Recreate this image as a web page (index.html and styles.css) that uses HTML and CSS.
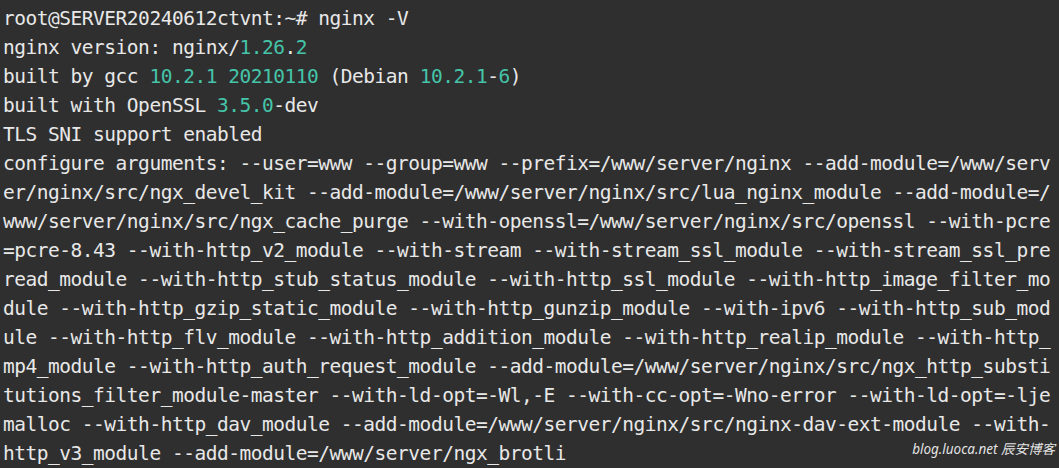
FILE: index.html
```html
<!DOCTYPE html>
<html lang="en">
<head>
<meta charset="utf-8">
<title>nginx -V</title>
<link rel="stylesheet" href="styles.css">
</head>
<body>
<main class="terminal">
<div class="line">root@SERVER20240612ctvnt:~# nginx -V</div>
<div class="line">nginx version: nginx/<span class="num">1.26</span>.<span class="num">2</span></div>
<div class="line">built by gcc <span class="num">10.2.1 20210110</span> (Debian <span class="num">10.2.1</span>-<span class="num">6</span>)</div>
<div class="line">built with OpenSSL <span class="num">3.5.0</span>-dev</div>
<div class="line">TLS SNI support enabled</div>
<div class="line">configure arguments: --user=www --group=www --prefix=/www/server/nginx --add-module=/www/serv</div>
<div class="line">er/nginx/src/ngx_devel_kit --add-module=/www/server/nginx/src/lua_nginx_module --add-module=/</div>
<div class="line">www/server/nginx/src/ngx_cache_purge --with-openssl=/www/server/nginx/src/openssl --with-pcre</div>
<div class="line">=pcre-8.43 --with-http_v2_module --with-stream --with-stream_ssl_module --with-stream_ssl_pre</div>
<div class="line">read_module --with-http_stub_status_module --with-http_ssl_module --with-http_image_filter_mo</div>
<div class="line">dule --with-http_gzip_static_module --with-http_gunzip_module --with-ipv6 --with-http_sub_mod</div>
<div class="line">ule --with-http_flv_module --with-http_addition_module --with-http_realip_module --with-http_</div>
<div class="line">mp4_module --with-http_auth_request_module --add-module=/www/server/nginx/src/ngx_http_substi</div>
<div class="line">tutions_filter_module-master --with-ld-opt=-Wl,-E --with-cc-opt=-Wno-error --with-ld-opt=-lje</div>
<div class="line">malloc --with-http_dav_module --add-module=/www/server/nginx/src/nginx-dav-ext-module --with-</div>
<div class="line">http_v3_module --add-module=/www/server/ngx_brotli</div>
<div class="watermark">blog.luoca.net 辰安博客</div>
</main>
</body>
</html>
```

FILE: styles.css
```css
html, body {
  margin: 0;
  padding: 0;
  background: #2f2f2f;
}

.terminal {
  position: relative;
  width: 1059px;
  height: 468px;
  box-sizing: border-box;
  padding: 4px 0 0 3px;
  background: #2f2f2f;
  color: #e8e8e8;
  font-family: "DejaVu Sans Mono", "Liberation Mono", monospace;
  font-size: 19.5px;
  letter-spacing: -0.48px;
  line-height: 29px;
  overflow: hidden;
}

.line {
  white-space: pre;
}

.num {
  color: #45c4a9;
}

.watermark {
  position: absolute;
  right: 4px;
  bottom: 10px;
  font-family: "Noto Sans", "Noto Sans CJK SC", sans-serif;
  font-style: italic;
  font-size: 13.5px;
  line-height: 18px;
  letter-spacing: 0;
  color: rgba(255, 255, 255, 0.88);
}
```
